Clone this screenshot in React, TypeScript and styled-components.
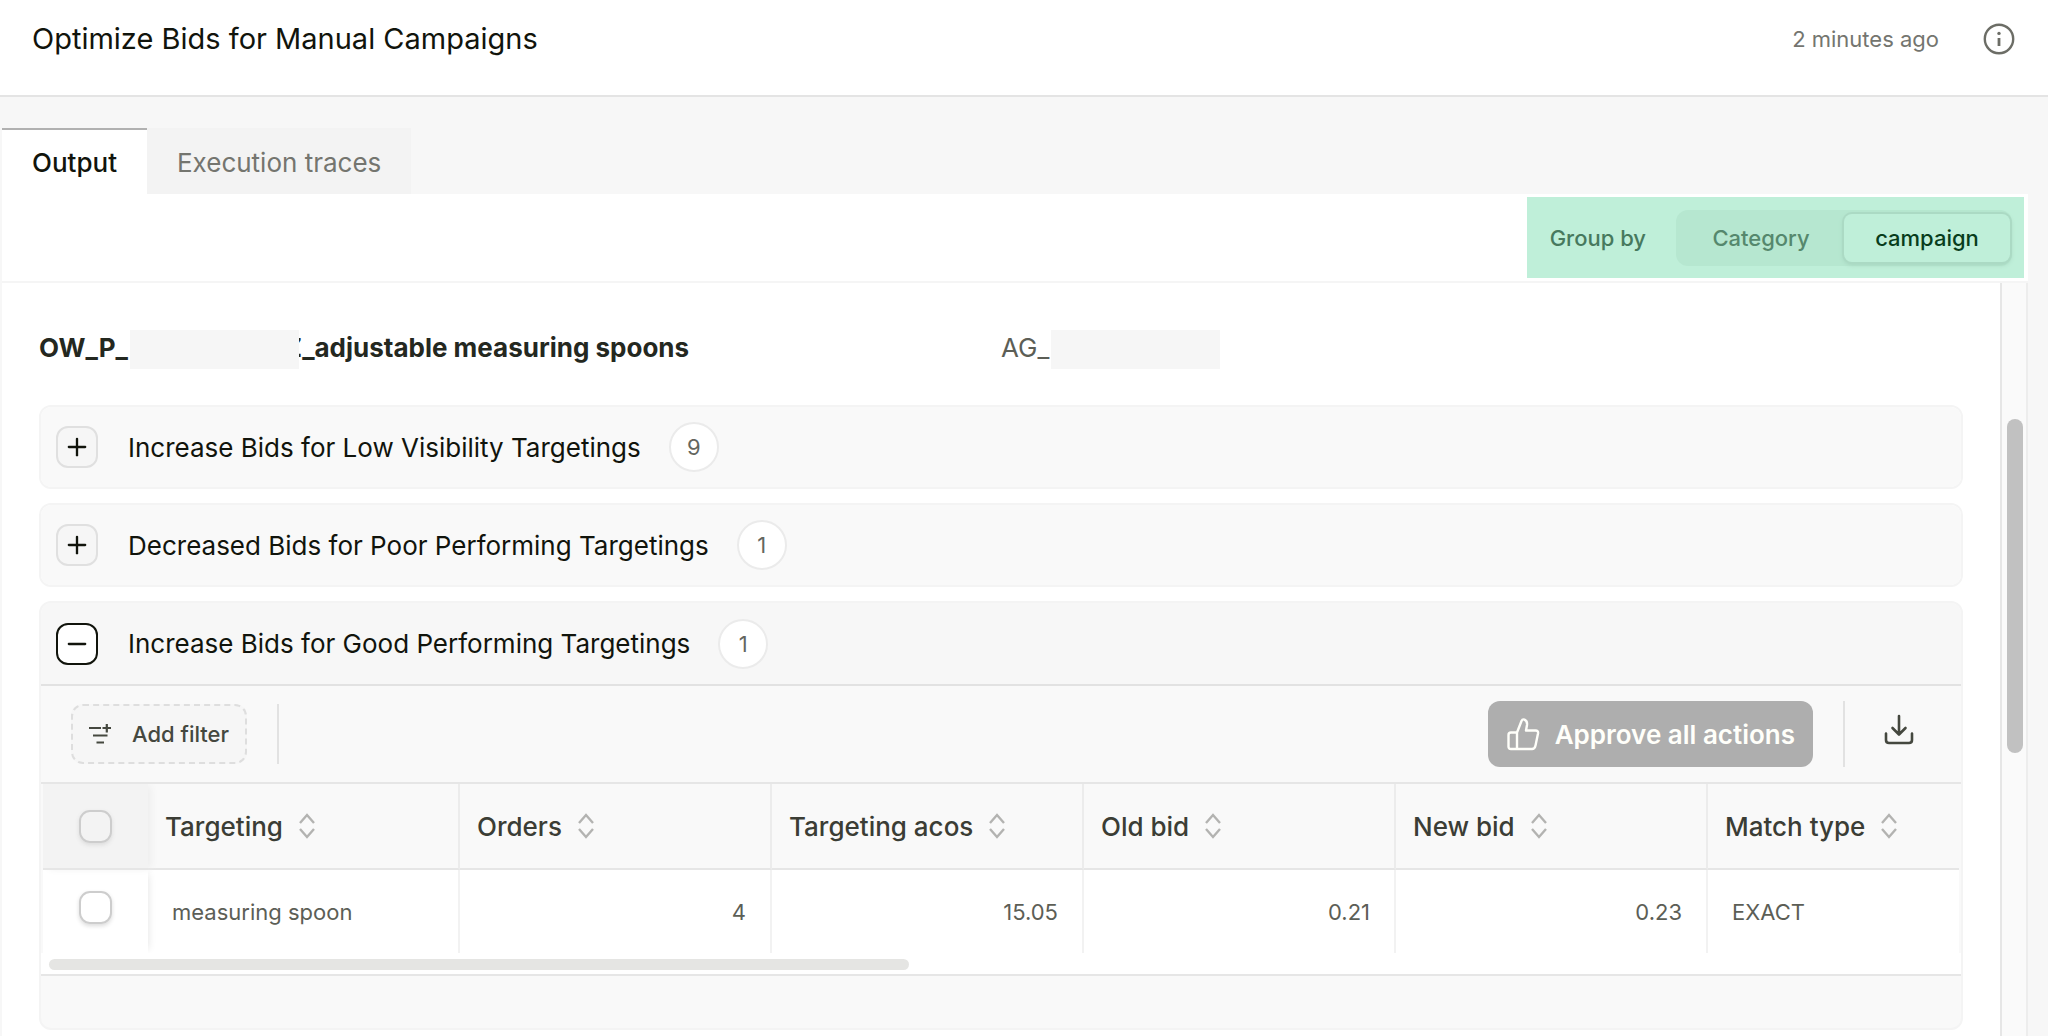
import React, { useState } from "react";
import styled, { createGlobalStyle, css } from "styled-components";
import { Plus, Minus } from "lucide-react";

const GlobalStyle = createGlobalStyle`
  *, *::before, *::after { box-sizing: border-box; }
  body {
    margin: 0;
    background: #f7f7f7;
    color: #11140c;
    font-family: Inter, "Liberation Sans", sans-serif;
    font-size: 22px;
  }
  button, input { font: inherit; color: inherit; margin: 0; }
  h1, h2, h3, p { margin: 0; font-weight: inherit; }
`;

const Page = styled.div`
  display: flex;
  flex-direction: column;
  height: 100vh;
  overflow: hidden;
`;

const Header = styled.header`
  display: flex;
  align-items: center;
  height: 97px;
  flex: none;
  padding: 0 33px 18px 32px;
  background: #fff;
  border-bottom: 2px solid #e4e4e4;
`;

const Title = styled.h1`
  flex: 1;
  font-size: 29px;
  line-height: 36px;
`;

const Timestamp = styled.time`
  margin-right: 44px;
  color: #74756f;
`;

const IconButton = styled.button`
  display: flex;
  padding: 0;
  border: 0;
  background: none;
  color: #6c6d66;
`;

const DownloadButton = styled(IconButton)`
  padding: 0 9px 8px;
  color: #45483f;
`;

const Tabs = styled.nav`
  display: flex;
  flex: none;
  height: 97px;
  padding: 31px 0 0 2px;
`;

const Tab = styled.button<{ $active?: boolean }>`
  padding: 0 30px;
  border: 0;
  border-top: 2px solid ${(p) => (p.$active ? "#b1b1b1" : "#f3f3f3")};
  background: ${(p) => (p.$active ? "#fff" : "#f3f3f3")};
  color: ${(p) => (p.$active ? "#11140c" : "#74756f")};
  font-size: 26px;
  font-weight: ${(p) => (p.$active ? 500 : 400)};
`;

const Panel = styled.main`
  display: flex;
  flex-direction: column;
  flex: 1;
  min-height: 0;
  margin: 0 20px 0 2px;
  background: #fff;
`;

const GroupBar = styled.div`
  display: flex;
  flex: none;
  justify-content: flex-end;
  height: 89px;
  padding: 3px 4px 3px 0;
  border-bottom: 2px solid #f5f5f5;
`;

const GroupBy = styled.div`
  display: flex;
  align-items: center;
  gap: 30px;
  padding: 0 12px 0 23px;
  background: #bfefd9;
  color: #47795e;
  font-weight: 500;
`;

const Segments = styled.div`
  display: flex;
  height: 56px;
  padding: 4px 2px;
  border-radius: 12px;
  background: #b6e7d0;
`;

const Segment = styled.button<{ $active?: boolean }>`
  width: 166px;
  padding: 0;
  border: 0;
  border-radius: 8px;
  background: none;
  color: #55886d;
  ${(p) =>
    p.$active &&
    css`
      background: #bfefd9;
      color: #083d1c;
      box-shadow: 0 0 0 2px #abdac4, 0 2px 4px 1px #a5d4be;
    `}
`;

const ScrollArea = styled.div`
  display: flex;
  flex: 1;
  min-height: 0;
  border-right: 2px solid #ededed;
`;

const Content = styled.div`
  flex: 1;
  min-width: 0;
  overflow: hidden;
  padding: 47px 37px 0;
`;

const Track = styled.div`
  width: 26px;
  padding: 136px 3px 0 5px;
  background: #fafafa;
  border-left: 2px solid #e6e6e6;
`;

const Thumb = styled.div`
  height: 334px;
  border-radius: 8px;
  background: #c1c1c1;
`;

const CampaignRow = styled.div`
  display: grid;
  grid-template-columns: 1fr 1fr;
  height: 39px;
  margin-bottom: 36px;
  font-size: 26px;
  line-height: 36px;
`;

const CampaignName = styled.h2`
  display: flex;
  font-size: 26px;
  font-weight: 700;
  color: #24281f;
`;

const AdGroup = styled.p`
  display: flex;
  color: #5c5e56;
`;

const Redacted = styled.span<{ $overlap?: boolean }>`
  z-index: 1;
  width: 169px;
  height: 39px;
  margin-left: 2px;
  margin-right: ${(p) => (p.$overlap ? "-14px" : "0")};
  background: #f6f6f6;
`;

const Card = styled.section`
  margin-bottom: 14px;
  overflow: hidden;
  border: 2px solid #f4f4f4;
  border-radius: 12px;
  background: #f9f9f9;
`;

const CardHeader = styled.div<{ $open?: boolean }>`
  display: flex;
  align-items: center;
  height: ${(p) => (p.$open ? "83px" : "80px")};
  padding: 0 15px;
  background: ${(p) => (p.$open ? "#f7f7f7" : "#f9f9f9")};
  border-bottom: ${(p) => (p.$open ? "2px solid #e2e2e2" : "0")};
`;

const Toggle = styled.button<{ $open?: boolean }>`
  display: flex;
  align-items: center;
  justify-content: center;
  width: 42px;
  height: 42px;
  padding: 0;
  border: 2px solid ${(p) => (p.$open ? "#11140c" : "#e0e0e0")};
  border-radius: 12px;
  background: ${(p) => (p.$open ? "#fff" : "#f6f6f6")};
`;

const CardTitle = styled.h3`
  margin: 0 28px 0 30px;
  font-size: 26px;
`;

const Count = styled.span`
  display: flex;
  align-items: center;
  justify-content: center;
  width: 50px;
  height: 50px;
  border: 2px solid #ebebeb;
  border-radius: 50%;
  background: #fff;
  color: #64665f;
`;

const Toolbar = styled.div`
  display: flex;
  align-items: center;
  height: 98px;
  padding: 0 38px 0 30px;
  border-bottom: 2px solid #e6e6e6;
`;

const AddFilter = styled.button`
  display: flex;
  align-items: center;
  gap: 19px;
  height: 60px;
  padding: 0 16px 0 14px;
  border: 2px dashed #dedede;
  border-radius: 12px;
  background: #f6f6f6;
  color: #45483f;
  font-weight: 500;
`;

const Divider = styled.span<{ $tall?: boolean }>`
  width: 2px;
  height: ${(p) => (p.$tall ? "66px" : "60px")};
  margin: 0 30px;
  background: #e2e2e2;
`;

const Spacer = styled.div`
  flex: 1;
`;

const Approve = styled.button`
  display: flex;
  align-items: center;
  gap: 15px;
  height: 66px;
  padding: 0 18px;
  border: 0;
  border-radius: 12px;
  background: #aeaeae;
  color: #fffffa;
  font-size: 26px;
  font-weight: 600;
`;

const TableWrap = styled.div`
  overflow-x: auto;
  scrollbar-width: none;
  margin: 0 2px;
  background: #fff;
`;

const Table = styled.table`
  width: 100%;
  min-width: 1800px;
  table-layout: fixed;
  border-collapse: separate;
  border-spacing: 0;
`;

const HeadCell = styled.th`
  width: 312px;
  height: 86px;
  padding: 0 17px;
  border-right: 2px solid #ececec;
  border-bottom: 2px solid #e6e6e6;
  background: #f9f9f9;
  color: #3b3d35;
  font-size: 26px;
  font-weight: 500;
  text-align: left;
  &:last-child { width: auto; border-right: 0; }
`;

const SelectHead = styled(HeadCell)`
  position: relative;
  width: 105px;
  padding: 0 0 0 36px;
  border-right: 0;
  background: #f3f3f3;
  box-shadow: 4px 0 8px -2px #ebebeb;
`;

const Cell = styled.td<{ $number?: boolean }>`
  height: 83px;
  padding: 0 24px;
  border-right: 2px solid #f2f2f2;
  color: #5c5e56;
  text-align: ${(p) => (p.$number ? "right" : "left")};
  &:last-child { border-right: 0; }
`;

const SelectCell = styled(Cell)`
  padding: 0 0 8px 36px;
  border-right: 0;
  box-shadow: 4px 0 8px -4px #e2e2e2;
`;

const HeadLabel = styled.button`
  display: flex;
  align-items: center;
  gap: 16px;
  padding: 0;
  border: 0;
  background: none;
`;

const Checkbox = styled.input`
  display: block;
  appearance: none;
  width: 33px;
  height: 33px;
  border: 2px solid #cdcdcd;
  border-radius: 11px;
  box-shadow: 0 2px 4px #dcdcdc;
  &:checked { background: #11140c; }
`;

const TableScroll = styled.div`
  display: flex;
  height: 23px;
  padding: 6px 0 4px 8px;
  background: #fff;
  border-bottom: 2px solid #e6e6e6;
`;

const TableThumb = styled.div`
  width: 45%;
  border-radius: 6px;
  background: #e5e5e3;
`;

const CardFooter = styled.div`
  height: 52px;
`;

const InfoIcon = () => (
  <svg width="32" height="32" viewBox="0 0 32 32" fill="none" stroke="currentColor" strokeWidth="2.4" aria-hidden>
    <circle cx="16" cy="16" r="14.2" />
    <path d="M16 15v8" strokeWidth="2.8" />
    <circle cx="16" cy="10.4" r="1.7" fill="currentColor" stroke="none" />
  </svg>
);

const FilterIcon = () => (
  <svg width="26" height="24" viewBox="0 0 26 24" fill="none" stroke="currentColor" strokeWidth="2.2" aria-hidden>
    <path d="M2 6h12M15.500 6h8.500M19.800 2v8.500M6 13.500h14.500M9.500 20.500h7.500" />
  </svg>
);

const SortIcon = () => (
  <svg width="16" height="26" viewBox="0 0 16 26" fill="none" stroke="#b3b3b1" strokeWidth="2.4" aria-hidden>
    <path d="M1 10l7-8 7 8M1 16l7 8 7-8" />
  </svg>
);

const ThumbUpIcon = () => (
  <svg width="34" height="34" viewBox="0 0 34 34" fill="none" stroke="currentColor" strokeWidth="2.4" strokeLinejoin="round" aria-hidden>
    <path d="M11 15.500L15.500 4Q16.500 1.800 18.500 2.600Q21.500 4 21 8L20 13.500H29.500Q32.500 13.500 32 16.500L29.500 28.500Q28.800 32 26 32H5Q2.500 32 2.500 29.500V18Q2.500 15.500 5 15.500H11V32" />
  </svg>
);

const DownloadIcon = () => (
  <svg width="30" height="32" viewBox="0 0 30 32" fill="none" stroke="currentColor" strokeWidth="2.6" strokeLinecap="round" strokeLinejoin="round" aria-hidden>
    <path d="M15 2v18M8.500 14L15 20.500l6.500-6.500M2 19.500V26q0 3 3 3h20q3 0 3-3v-6.500" />
  </svg>
);

const columns = ["Targeting", "Orders", "Targeting acos", "Old bid", "New bid", "Match type"];
const row = [
  { value: "measuring spoon" },
  { value: "4", number: true },
  { value: "15.05", number: true },
  { value: "0.21", number: true },
  { value: "0.23", number: true },
  { value: "EXACT" },
];

function Group({ title, count, open, children }: { title: string; count: number; open?: boolean; children?: React.ReactNode }) {
  return (
    <Card>
      <CardHeader $open={open}>
        <Toggle $open={open} aria-expanded={!!open} aria-label={title}>
          {open ? <Minus size={28} strokeWidth={2} /> : <Plus size={28} strokeWidth={2} />}
        </Toggle>
        <CardTitle>{title}</CardTitle>
        <Count>{count}</Count>
      </CardHeader>
      {children}
    </Card>
  );
}

export default function App() {
  const [groupBy, setGroupBy] = useState("campaign");
  return (
    <Page>
      <GlobalStyle />
      <Header>
        <Title>Optimize Bids for Manual Campaigns</Title>
        <Timestamp>2 minutes ago</Timestamp>
        <IconButton aria-label="Details">
          <InfoIcon />
        </IconButton>
      </Header>
      <Tabs>
        <Tab $active>Output</Tab>
        <Tab>Execution traces</Tab>
      </Tabs>
      <Panel>
        <GroupBar>
          <GroupBy>
            <span>Group by</span>
            <Segments>
              {["Category", "campaign"].map((name) => (
                <Segment key={name} $active={groupBy === name} onClick={() => setGroupBy(name)}>
                  {name}
                </Segment>
              ))}
            </Segments>
          </GroupBy>
        </GroupBar>
        <ScrollArea>
          <Content>
            <CampaignRow>
              <CampaignName>
                <span>OW_P_</span>
                <Redacted $overlap />
                <span>Z_adjustable measuring spoons</span>
              </CampaignName>
              <AdGroup>
                <span>AG_</span>
                <Redacted />
              </AdGroup>
            </CampaignRow>
            <Group title="Increase Bids for Low Visibility Targetings" count={9} />
            <Group title="Decreased Bids for Poor Performing Targetings" count={1} />
            <Group title="Increase Bids for Good Performing Targetings" count={1} open>
              <Toolbar>
                <AddFilter>
                  <FilterIcon />
                  Add filter
                </AddFilter>
                <Divider />
                <Spacer />
                <Approve>
                  <ThumbUpIcon />
                  Approve all actions
                </Approve>
                <Divider $tall />
                <DownloadButton aria-label="Download">
                  <DownloadIcon />
                </DownloadButton>
              </Toolbar>
              <TableWrap>
                <Table>
                  <thead>
                    <tr>
                      <SelectHead>
                        <Checkbox type="checkbox" aria-label="Select all rows" />
                      </SelectHead>
                      {columns.map((name) => (
                        <HeadCell key={name}>
                          <HeadLabel>
                            {name}
                            <SortIcon />
                          </HeadLabel>
                        </HeadCell>
                      ))}
                    </tr>
                  </thead>
                  <tbody>
                    <tr>
                      <SelectCell>
                        <Checkbox type="checkbox" aria-label="Select measuring spoon" />
                      </SelectCell>
                      {row.map((cell, i) => (
                        <Cell key={columns[i]} $number={cell.number}>
                          {cell.value}
                        </Cell>
                      ))}
                    </tr>
                  </tbody>
                </Table>
              </TableWrap>
              <TableScroll>
                <TableThumb />
              </TableScroll>
              <CardFooter />
            </Group>
          </Content>
          <Track>
            <Thumb />
          </Track>
        </ScrollArea>
      </Panel>
    </Page>
  );
}
